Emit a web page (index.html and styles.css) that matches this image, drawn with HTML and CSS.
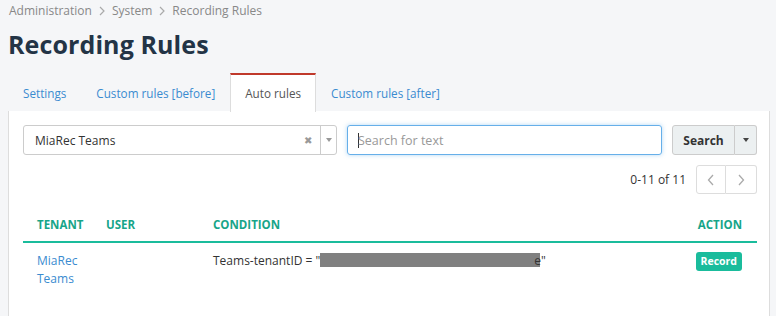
FILE: index.html
```html
<!DOCTYPE html>
<html lang="en">
<head>
  <meta charset="UTF-8">
  <title>Recording Rules</title>
  <link rel="stylesheet" href="styles.css">
</head>
<body>
  <div class="breadcrumb">
    <a href="#">Administration</a>
    <svg class="sep" width="6" height="10" viewBox="0 0 6 10"><path d="M1 1 L5 5 L1 9" fill="none" stroke="#aaa" stroke-width="1.2"/></svg>
    <a href="#">System</a>
    <svg class="sep" width="6" height="10" viewBox="0 0 6 10"><path d="M1 1 L5 5 L1 9" fill="none" stroke="#aaa" stroke-width="1.2"/></svg>
    <span>Recording Rules</span>
  </div>
  <h1>Recording Rules</h1>

  <ul class="tabs">
    <li><a href="#">Settings</a></li>
    <li><a href="#">Custom rules [before]</a></li>
    <li class="active"><a href="#">Auto rules</a></li>
    <li><a href="#">Custom rules [after]</a></li>
  </ul>

  <div class="panel">
    <div class="filters">
      <div class="select">
        <span class="select-value">MiaRec Teams</span>
        <span class="select-clear">&#x2716;</span>
        <span class="select-arrow"><span class="caret"></span></span>
      </div>
      <div class="search-input"><span class="cursor"></span>Search for text</div>
      <div class="btn-group">
        <button class="btn">Search</button>
        <button class="btn btn-caret"><span class="caret dark"></span></button>
      </div>
    </div>

    <div class="pager">
      <span class="pager-info">0-11 of 11</span>
      <div class="pager-btns">
        <button class="pbtn"><svg width="10" height="14" viewBox="0 0 10 14"><path d="M7 2 L2.5 7 L7 12" fill="none" stroke="#aaa" stroke-width="1.3"/></svg></button>
        <button class="pbtn"><svg width="10" height="14" viewBox="0 0 10 14"><path d="M3 2 L7.5 7 L3 12" fill="none" stroke="#aaa" stroke-width="1.3"/></svg></button>
      </div>
    </div>

    <table class="rules">
      <colgroup>
        <col class="w-tenant">
        <col class="w-user">
        <col>
        <col class="w-action">
      </colgroup>
      <thead>
        <tr>
          <th>Tenant</th>
          <th>User</th>
          <th>Condition</th>
          <th class="col-action">Action</th>
        </tr>
      </thead>
      <tbody>
        <tr>
          <td><a href="#">MiaRec Teams</a></td>
          <td></td>
          <td>Teams-tenantID = "<span class="redacted"></span>e"</td>
          <td class="col-action"><span class="label">Record</span></td>
        </tr>
      </tbody>
    </table>
  </div>
</body>
</html>
```

FILE: styles.css
```css
body {
  margin: 0;
  padding: 0 6px 0 8px;
  background: #f5f6f8;
  font-family: 'Open Sans', sans-serif;
  font-size: 12px;
  color: #333;
}
a {
  text-decoration: none;
}
.breadcrumb {
  font-size: 12px;
  color: #888;
  height: 22px;
  line-height: 22px;
  display: flex;
  align-items: center;
  padding-left: 1px;
}
.breadcrumb a {
  color: #888;
}
.breadcrumb .sep {
  margin: 0 7px;
}
h1 {
  margin: 3px 0 0 0;
  font-size: 25px;
  line-height: 38px;
  font-weight: bold;
  color: #233446;
  letter-spacing: 0.1px;
}
.tabs {
  list-style: none;
  margin: 10px 0 0 0;
  padding: 0;
  display: flex;
  height: 38px;
  font-size: 11.7px;
}
.tabs li a {
  display: block;
  padding: 0 15px;
  line-height: 37px;
  color: #3a8bd0;
  border-top: 2px solid transparent;
  height: 36px;
}
.tabs li.active a {
  background: white;
  color: #555;
  border-top: 2px solid #c0392b;
  border-left: 1px solid #ddd;
  border-right: 1px solid #ddd;
  padding: 0 14px;
  height: 37px;
}
.panel {
  background: white;
  border: 1px solid #ddd;
  border-top: none;
  border-bottom: none;
  padding: 14px 12px 0 14px;
  height: 204px;
}
.filters {
  display: flex;
  gap: 10px;
  height: 30px;
}
.select {
  width: 312px;
  border: 1px solid #ccc;
  border-radius: 3px;
  display: flex;
  align-items: center;
}
.select-value {
  flex: 1;
  padding-left: 11px;
  color: #333;
}
.select-clear {
  font-size: 10px;
  color: #999;
  padding-right: 8px;
}
.select-arrow {
  width: 15px;
  height: 100%;
  border-left: 1px solid #ccc;
  display: flex;
  align-items: center;
  justify-content: center;
}
.caret {
  width: 0;
  height: 0;
  border-left: 3px solid transparent;
  border-right: 3px solid transparent;
  border-top: 4px solid #999;
}
.caret.dark {
  border-top-color: #444;
}
.search-input {
  width: 303px;
  border: 1px solid #66afe9;
  border-radius: 3px;
  box-shadow: 0 0 4px rgba(102,175,233,0.5);
  padding-left: 10px;
  display: flex;
  align-items: center;
  color: #999;
  font-size: 12.5px;
}
.cursor {
  width: 1px;
  height: 15px;
  background: #333;
  margin-right: -1px;
}
.btn-group {
  display: flex;
}
.btn {
  font-family: 'Open Sans', sans-serif;
  font-size: 12px;
  font-weight: bold;
  color: #333;
  background: #ecf0f1;
  border: 1px solid #ccc;
  border-radius: 3px 0 0 3px;
  height: 30px;
  width: 63px;
  padding: 0;
}
.btn-caret {
  width: 22px;
  border-left: none;
  border-radius: 0 3px 3px 0;
  display: flex;
  align-items: center;
  justify-content: center;
}
.pager {
  display: flex;
  justify-content: flex-end;
  align-items: center;
  gap: 10px;
  margin-top: 10px;
  height: 29px;
}
.pager-info {
  color: #333;
}
.pager-btns {
  display: flex;
}
.pbtn {
  width: 31px;
  height: 29px;
  background: white;
  border: 1px solid #ddd;
  padding: 0;
  display: flex;
  align-items: center;
  justify-content: center;
}
.pbtn:first-child {
  border-radius: 3px 0 0 3px;
  width: 30px;
}
.pbtn:last-child {
  border-left: none;
  border-radius: 0 3px 3px 0;
}
.rules {
  width: 100%;
  border-collapse: collapse;
  table-layout: fixed;
  margin-top: 16px;
}
.w-tenant {
  width: 69px;
}
.w-user {
  width: 107px;
}
.w-action {
  width: 110px;
}
.rules th {
  text-align: left;
  font-size: 11.5px;
  font-weight: bold;
  text-transform: uppercase;
  color: #17a589;
  padding: 6px 14px 7px 14px;
  line-height: 18px;
  border-bottom: 2px solid #1abc9c;
}
.rules td {
  vertical-align: top;
  padding: 9px 14px;
  line-height: 18px;
}
.rules .col-action {
  text-align: right;
  padding-right: 15px;
}
.rules td a {
  color: #3a8bd0;
}
.redacted {
  display: inline-block;
  width: 220px;
  height: 14px;
  background: #808080;
  vertical-align: -2px;
  margin-right: -6px;
}
.label {
  display: inline-block;
  background: #1abc9c;
  color: white;
  font-size: 10.5px;
  font-weight: bold;
  padding: 0 5px;
  line-height: 19px;
  border-radius: 3px;
}
```
